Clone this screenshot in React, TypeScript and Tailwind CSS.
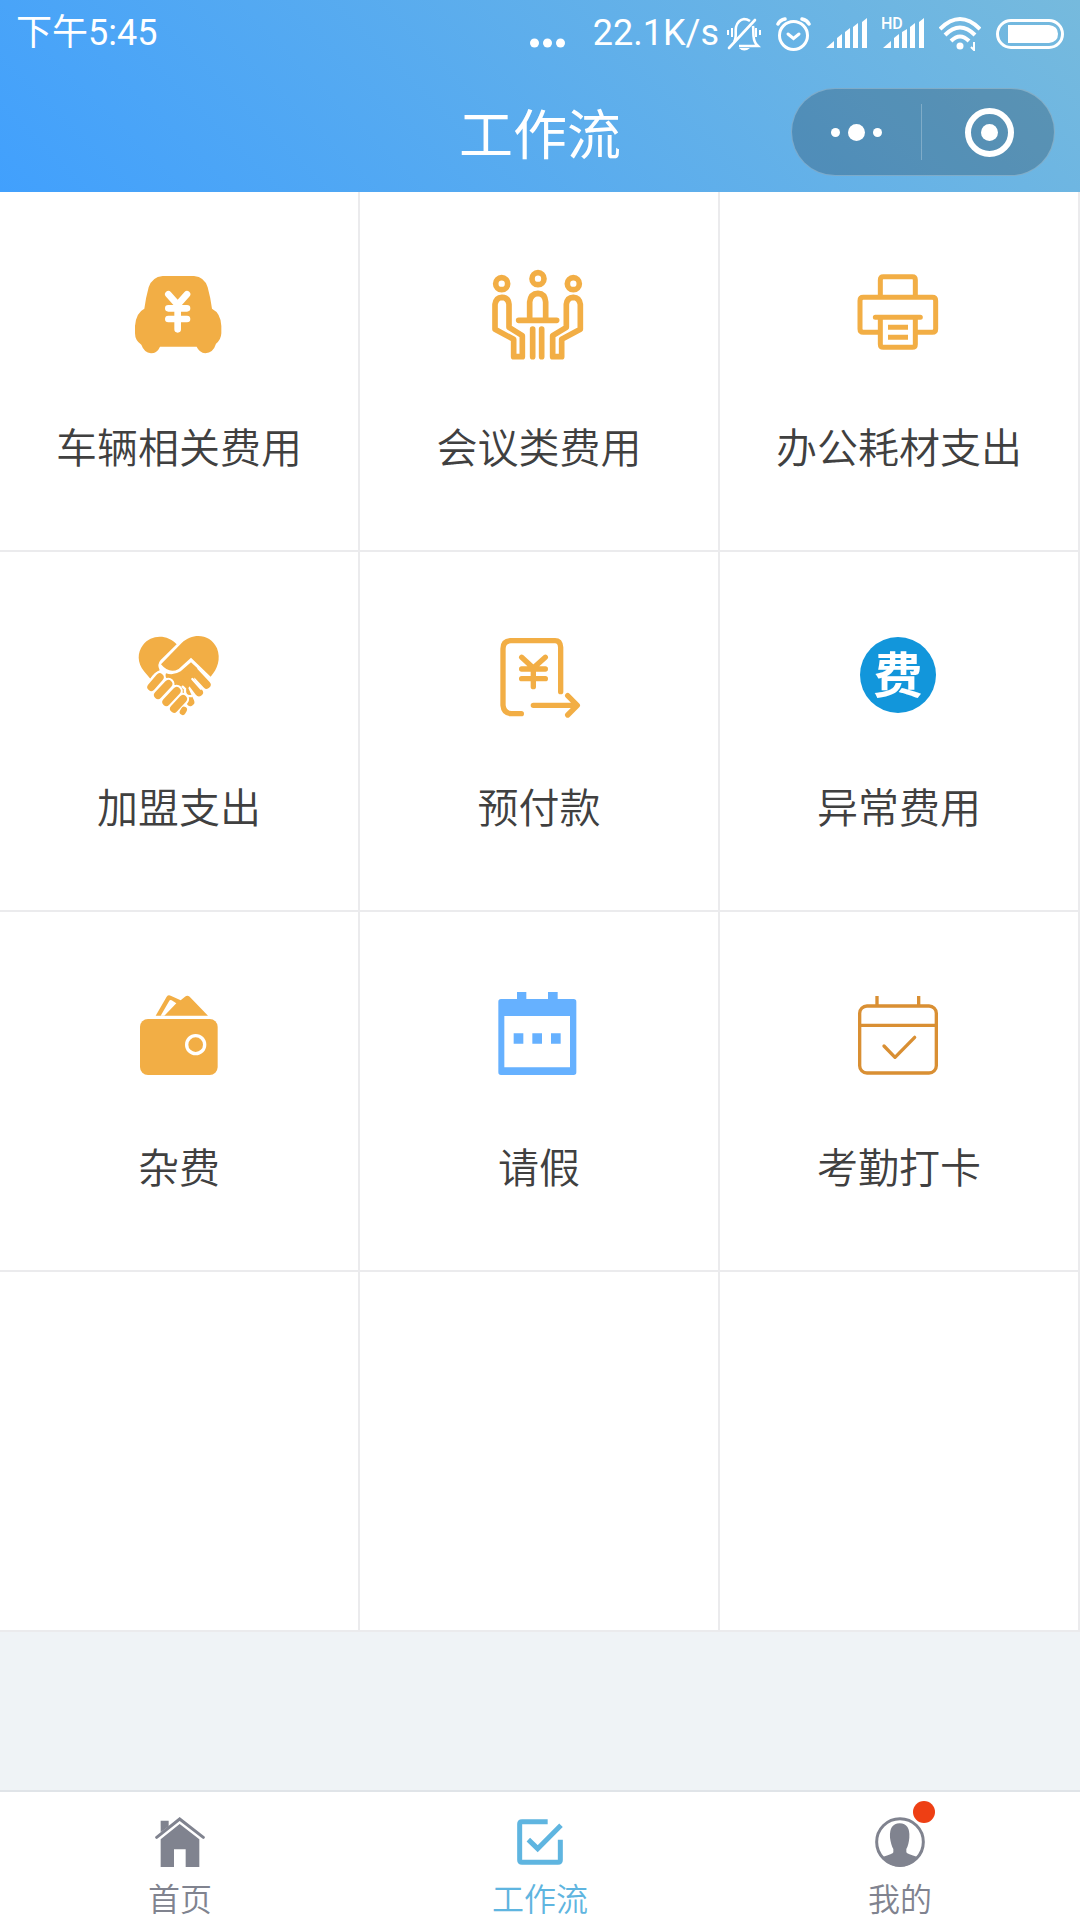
import type { ReactNode } from "react";

const ORANGE = "#f2ae45";

function TileIcon({ children }: { children: ReactNode }) {
  return (
    <svg viewBox="-3 0 420 390" className="h-[130px] w-[140px]" fill="none" aria-hidden="true">
      {children}
    </svg>
  );
}

function CarIcon() {
  return (
    <TileIcon>
      <path
        fill={ORANGE}
        d="M158 78H252Q284 81 293 112Q302 145 306 176Q333 190 334 228V250Q333 270 318 281Q310 308 286 310Q268 308 260 290H150Q142 309 123 310Q102 307 94 284Q75 272 75 250V228Q78 188 103 176Q107 145 116 112Q126 81 158 78Z"
      />
      <path
        stroke="#fff"
        strokeWidth="20"
        strokeLinecap="round"
        strokeLinejoin="round"
        d="M175 133L203 164L231 133M203 164V238M175 175H231M175 207H231"
      />
    </TileIcon>
  );
}

function MeetingIcon() {
  return (
    <TileIcon>
      <g stroke={ORANGE} strokeWidth="17" strokeLinecap="round" strokeLinejoin="round">
        <circle cx="95" cy="101" r="18" />
        <circle cx="204" cy="86" r="18" />
        <circle cx="310" cy="101" r="18" />
        <path d="M146 211H260M179 208V156Q182 131 204 130Q225 131 227 156V208" />
        <path d="M188 237V320M215 237V320" />
        <path d="M75 238V163Q78 143 96 142Q115 143 117 163V232L157 257V320H131V268Z" />
        <path d="M331 238V163Q328 143 310 142Q291 143 289 163V232L248 257V320H275V268Z" />
      </g>
    </TileIcon>
  );
}

function PrinterIcon() {
  return (
    <TileIcon>
      <g stroke={ORANGE} strokeWidth="15" strokeLinecap="round" strokeLinejoin="round">
        <path d="M151 136V90Q151 80 160 80H247Q256 80 256 90V136" />
        <path d="M145 247H100Q90 247 90 237V152Q90 142 100 142H307Q317 142 317 152V237Q317 247 307 247H262" />
        <path d="M136 202H271M151 205V283Q151 292 160 292H247Q256 292 256 283V205" />
        <path strokeLinecap="butt" d="M174 232H234M174 262H234" />
      </g>
    </TileIcon>
  );
}

function HandshakeIcon() {
  return (
    <TileIcon>
      <path
        fill={ORANGE}
        d="M121 206L102 184C82 158 81 128 99 105C124 72 173 73 200 103L152 150Q140 163 149 181Q134 186 121 206Z"
      />
      <path
        fill={ORANGE}
        d="M153 163L215 99C250 66 302 73 321 115C333 147 323 177 302 200L243 143L206 177Q178 193 153 163Z"
      />
      <path fill={ORANGE} d="M168 190Q190 198 212 184L243 157L262 175L250 215L222 250L200 230L165 200Z" />
      <g stroke={ORANGE} strokeWidth="24" strokeLinecap="round">
        <path d="M245 176L290 224M230 198L267 247M216 222L241 276" />
      </g>
      <g stroke="#fff" strokeWidth="7" strokeLinecap="round">
        <path d="M247 207L273 236M218 230L225 237Q222 262 245 258" />
      </g>
      <g stroke="#fff" strokeWidth="37" strokeLinecap="round">
        <path d="M149 202L124 231M175 222L144 255M200 243L169 276M219 267L190 298" />
      </g>
      <g stroke={ORANGE} strokeWidth="24" strokeLinecap="round">
        <path d="M149 202L124 231M175 222L144 255M200 243L169 276M219 267L192 296" />
        <path strokeWidth="18" d="M222 299L218 306" />
      </g>
    </TileIcon>
  );
}

function PrepayIcon() {
  return (
    <TileIcon>
      <g stroke={ORANGE} strokeWidth="16" strokeLinecap="round" strokeLinejoin="round">
        <path d="M272 245V112Q271 92 255 92H122Q99 93 99 116V286Q101 310 124 311H154" />
        <path d="M155 142L190 174L226 142M190 174V230M155 177H226M155 206H226" />
        <path d="M190 286H320M293 257L322 286L293 315" />
      </g>
    </TileIcon>
  );
}

function FeeIcon() {
  return (
    <TileIcon>
      <circle cx="204" cy="195" r="114" fill="#1296db" />
      <text
        x="204"
        y="248"
        textAnchor="middle"
        fill="#fff"
        className="font-['Noto_Sans_CJK_SC',sans-serif] text-[148px] font-bold"
      >
        费
      </text>
    </TileIcon>
  );
}

function WalletIcon() {
  return (
    <TileIcon>
      <rect x="90" y="147" width="233" height="168" rx="24" fill={ORANGE} />
      <circle cx="257" cy="224" r="27" stroke="#fff" strokeWidth="10" />
      <path fill={ORANGE} d="M137 137L170 80Q175 73 182 77L212 91L225 80Q232 74 239 80L294 137Z" />
      <path fill="#fff" d="M152 137L178 92Q180 88 185 91L199 100L163 137Z" />
    </TileIcon>
  );
}

function LeaveIcon() {
  return (
    <TileIcon>
      <path
        fill="#66b1ff"
        fillRule="evenodd"
        d="M141 66H169V87H234V66H263V87H311Q319 87 319 95V307Q319 315 311 315H93Q85 315 85 307V95Q85 87 93 87H141ZM103 138V292H300V138Z"
      />
      <path fill="#66b1ff" d="M131 190H160V221H131ZM187 190H216V221H187ZM243 190H272V221H243Z" />
    </TileIcon>
  );
}

function PunchIcon() {
  return (
    <TileIcon>
      <g stroke="#d98f33" strokeWidth="10" strokeLinecap="round" strokeLinejoin="round">
        <rect x="89" y="108" width="230" height="201" rx="22" />
        <path strokeLinecap="butt" d="M89 166H319M141 78V108M266 78V108" />
        <path d="M162 228L195 262L254 202" />
      </g>
    </TileIcon>
  );
}

const tiles = [
  { label: "车辆相关费用", icon: <CarIcon /> },
  { label: "会议类费用", icon: <MeetingIcon /> },
  { label: "办公耗材支出", icon: <PrinterIcon /> },
  { label: "加盟支出", icon: <HandshakeIcon /> },
  { label: "预付款", icon: <PrepayIcon /> },
  { label: "异常费用", icon: <FeeIcon /> },
  { label: "杂费", icon: <WalletIcon /> },
  { label: "请假", icon: <LeaveIcon /> },
  { label: "考勤打卡", icon: <PunchIcon /> },
];

function StatusIcons() {
  return (
    <div className="flex items-center gap-[15px]">
      <svg className="h-9 w-[34px]" viewBox="0 0 34 36" fill="none" stroke="currentColor" strokeWidth="2.6">
        <path d="M7 27C10 23 8 17 9 12Q11 5 17 4Q20 4 23 6M26 11C27 18 25 23 29 29L31 31H12" />
        <path d="M28 5L2 33" strokeLinecap="round" />
        <path d="M12 33H23Q17 38 12 33Z" fill="currentColor" stroke="none" />
        <path strokeWidth="2" d="M5 13V22M1 15V20M29 13V22M33 15V20" />
      </svg>
      <svg className="h-9 w-[35px]" viewBox="0 0 35 36" fill="none" stroke="currentColor" strokeWidth="3" strokeLinecap="round">
        <circle cx="17.5" cy="20.5" r="14" />
        <path d="M12 19L17.500 23.500L23 19" />
        <path d="M2 9Q4 5 9 4M33 9Q31 5 26 4" strokeWidth="3.5" />
      </svg>
      <svg className="h-9 w-[41px]" viewBox="0 0 41 36" fill="currentColor">
        <path d="M0 33L8 26V33ZM11 23L16 19V33H11ZM19 17L24 13V33H19ZM27 12L32 8V33H27ZM36 7L41 3V33H36Z" />
      </svg>
      <svg className="h-9 w-[42px]" viewBox="0 0 42 36" fill="currentColor">
        <text x="-1" y="14" className="font-['Roboto',sans-serif] text-[16px] font-medium">
          HD
        </text>
        <path d="M1 33L9 26V33ZM12 23L17 19V33H12ZM20 17L25 14V33H20ZM28 12L33 8V33H28ZM37 7L42 3V33H37Z" />
      </svg>
      <svg className="h-9 w-[42px]" viewBox="0 0 42 36" fill="none" stroke="currentColor" strokeWidth="4">
        <path d="M1 14Q21 -6 41 14M6 20Q21 5 36 20M12 26Q21 17 30 26" />
        <circle cx="21" cy="31" r="3.500" fill="currentColor" stroke="none" />
        <path strokeWidth="2" d="M35 27V35L32 32" />
      </svg>
      <svg className="h-9 w-[68px]" viewBox="0 0 68 36" fill="none">
        <rect x="1.5" y="5.5" width="65" height="27" rx="13.5" stroke="currentColor" strokeWidth="3" />
        <path d="M12 10H53Q62 11 62 19Q62 27 53 28H12Z" fill="currentColor" />
      </svg>
    </div>
  );
}

function HomeIcon() {
  return (
    <svg className="size-[50px]" viewBox="166 111 150 150" fill="none" aria-hidden="true">
      <path fill="currentColor" d="M183 178L240 132L299 178V261H258V208H223V261H183Z" />
      <path fill="currentColor" d="M183 122H207V139L183 157Z" />
      <path stroke="currentColor" strokeWidth="9" strokeLinecap="round" d="M171 172L240 117L311 172" />
    </svg>
  );
}

function WorkflowIcon() {
  return (
    <svg className="size-[50px]" viewBox="1246 111 150 150" fill="none" stroke="currentColor" strokeWidth="15" aria-hidden="true">
      <path d="M1344 125H1267Q1260 125 1260 132V240Q1260 247 1267 247H1375Q1382 247 1382 240V179" />
      <path d="M1286 179L1314 206L1384 136" />
    </svg>
  );
}

function PersonIcon() {
  return (
    <svg className="size-[50px]" viewBox="168 590 150 150" fill="none" aria-hidden="true">
      <circle cx="243" cy="665" r="70" stroke="currentColor" strokeWidth="9" />
      <path
        fill="currentColor"
        d="M190 710Q222 701 223 696V686Q216 674 213 652Q210 610 242 609Q274 610 271 652Q269 674 262 686V696Q264 701 296 710Q272 740 243 740Q214 740 190 710Z"
      />
    </svg>
  );
}

const tabs = [
  { label: "首页", icon: <HomeIcon />, active: false, badge: false },
  { label: "工作流", icon: <WorkflowIcon />, active: true, badge: false },
  { label: "我的", icon: <PersonIcon />, active: false, badge: true },
];

export default function App() {
  return (
    <div className="flex min-h-screen flex-col bg-[#eff3f6] font-['Noto_Sans_CJK_SC',sans-serif]">
      <header className="bg-linear-[45deg,#41a0fd,#76badd] text-white">
        <div className="flex h-[72px] items-center justify-between pr-4 pb-1.5 pl-4 font-['Roboto','Noto_Sans_CJK_SC',sans-serif] text-[36px] leading-[48px]">
          <span>下午5:45</span>
          <div className="flex items-center">
            <svg className="mr-7 h-9 w-[35px]" viewBox="0 0 35 36" fill="currentColor">
              <circle cx="4.500" cy="28" r="4.500" />
              <circle cx="17.500" cy="28" r="4.500" />
              <circle cx="30.500" cy="28" r="4.500" />
            </svg>
            <span className="mr-2">22.1K/s</span>
            <StatusIcons />
          </div>
        </div>
        <div className="grid h-[120px] grid-cols-[1fr_auto_1fr] items-center">
          <h1 className="col-start-2 text-[54px] leading-[70px]">工作流</h1>
          <div className="mr-[25px] flex h-[88px] w-[264px] items-center justify-self-end rounded-full border border-white/25 bg-black/20">
            <button type="button" aria-label="更多" className="flex flex-1 items-center justify-center gap-2">
              <span className="size-[9px] rounded-full bg-white" />
              <span className="size-[17px] rounded-full bg-white" />
              <span className="size-[9px] rounded-full bg-white" />
            </button>
            <span className="h-14 w-px bg-white/25" />
            <button type="button" aria-label="关闭" className="flex flex-1 items-center justify-center pl-1">
              <span className="flex size-[49px] items-center justify-center rounded-full border-6 border-white">
                <span className="size-[17px] rounded-full bg-white" />
              </span>
            </button>
          </div>
        </div>
      </header>

      <main className="grid grid-cols-3 bg-white">
        {tiles.map((tile) => (
          <button
            key={tile.label}
            type="button"
            className="flex h-[360px] flex-col items-center border-r-2 border-b-2 border-[#ebebed] pt-[58px] text-[#404040]"
          >
            {tile.icon}
            <span className="mt-[35px] text-[41px] leading-[60px] font-[350]">{tile.label}</span>
          </button>
        ))}
        {[0, 1, 2].map((i) => (
          <div key={i} className="h-[360px] border-r-2 border-b-2 border-[#ebebed]" />
        ))}
      </main>

      <nav className="mt-auto grid grid-cols-3 border-t-2 border-[#e0e4e8] bg-white">
        {tabs.map((tab) => (
          <a
            key={tab.label}
            href="#"
            aria-current={tab.active ? "page" : undefined}
            className={
              tab.active
                ? "flex h-32 flex-col items-center pt-[25px] text-[#5fb5e0]"
                : "flex h-32 flex-col items-center pt-[25px] text-[#80838f]"
            }
          >
            <span className="relative">
              {tab.icon}
              {tab.badge && <span className="absolute -top-4 -right-2.5 size-[22px] rounded-full bg-[#ee3f14]" />}
            </span>
            <span className="mt-2.5 text-[32px] leading-10 font-[350]">{tab.label}</span>
          </a>
        ))}
      </nav>
    </div>
  );
}
